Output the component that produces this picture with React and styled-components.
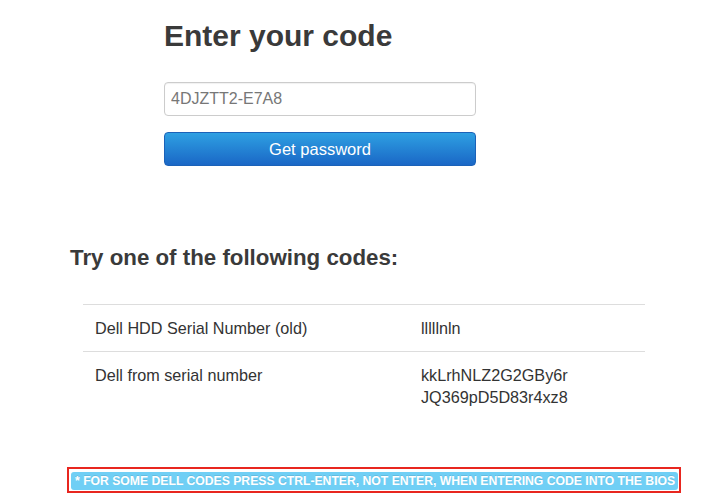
import styled, { createGlobalStyle } from "styled-components";

const GlobalStyle = createGlobalStyle`
  body {
    margin: 0;
    background: #fff;
    font-family: "Liberation Sans", Arial, sans-serif;
    color: #333;
  }
`;

const Page = styled.div`
  display: flex;
  flex-direction: column;
  width: 709px;
  min-height: 501px;
`;

const FormSection = styled.section`
  display: flex;
  flex-direction: column;
  width: 312px;
  margin-left: 164px;
  padding-top: 18px;
`;

const Title = styled.h1`
  margin: 0;
  font-size: 30px;
  line-height: 36px;
  font-weight: bold;
  color: #3a3a3a;
`;

const CodeInput = styled.input`
  box-sizing: border-box;
  height: 34px;
  margin-top: 28px;
  padding: 0 6px;
  border: 1px solid #cccccc;
  border-radius: 4px;
  font-family: "Liberation Sans", Arial, sans-serif;
  font-size: 16px;
  color: #777;
  box-shadow: inset 0 1px 1px rgba(0, 0, 0, 0.06);
  outline: none;
`;

const SubmitButton = styled.button`
  height: 34px;
  margin-top: 16px;
  border: 1px solid #1b62b8;
  border-radius: 4px;
  background: linear-gradient(to bottom, #2ea0e2, #1a67c6);
  color: #fff;
  font-family: "Liberation Sans", Arial, sans-serif;
  font-size: 16.5px;
  cursor: pointer;
`;

const CodesSection = styled.section`
  display: flex;
  flex-direction: column;
  padding-left: 70px;
  margin-top: 79px;
`;

const SubTitle = styled.h2`
  margin: 0;
  font-size: 22.3px;
  line-height: 26px;
  font-weight: bold;
  color: #3a3a3a;
`;

const CodesTable = styled.table`
  width: 562px;
  margin: 33px 0 0 13px;
  border-collapse: collapse;
  font-size: 16.2px;
  color: #333;
`;

const Row = styled.tr`
  & td {
    border-top: 1px solid #dddddd;
  }
`;

const Cell = styled.td`
  padding: 12px;
  line-height: 22px;
  vertical-align: top;
  width: ${({ $w }) => $w || "auto"};
`;

const Notice = styled.div`
  display: inline-flex;
  align-self: flex-start;
  margin: 47px 0 0 67px;
  padding: 3px 1px 1px 2px;
  border: 2px solid #e8261f;
`;

const Label = styled.span`
  display: inline-block;
  padding: 3px 3px 2px 4px;
  border-radius: 3px;
  background: #70cff5;
  color: #fff;
  font-size: 12.2px;
  line-height: 13px;
  font-weight: bold;
  text-transform: uppercase;
  text-shadow: 0 -1px 0 rgba(0, 0, 0, 0.1);
`;

const codes = [
  { name: "Dell HDD Serial Number (old)", values: ["lllllnln"] },
  {
    name: "Dell from serial number",
    values: ["kkLrhNLZ2G2GBy6r", "JQ369pD5D83r4xz8"],
  },
];

export default function App() {
  return (
    <Page>
      <GlobalStyle />
      <FormSection>
        <Title>Enter your code</Title>
        <CodeInput defaultValue="4DJZTT2-E7A8" />
        <SubmitButton>Get password</SubmitButton>
      </FormSection>
      <CodesSection>
        <SubTitle>Try one of the following codes:</SubTitle>
        <CodesTable>
          <tbody>
            {codes.map((c) => (
              <Row key={c.name}>
                <Cell $w="302px">{c.name}</Cell>
                <Cell>
                  {c.values.map((v) => (
                    <div key={v}>{v}</div>
                  ))}
                </Cell>
              </Row>
            ))}
          </tbody>
        </CodesTable>
      </CodesSection>
      <Notice>
        <Label>
          * For some Dell codes press CTRL-Enter, not Enter, when entering
          code into the BIOS
        </Label>
      </Notice>
    </Page>
  );
}
